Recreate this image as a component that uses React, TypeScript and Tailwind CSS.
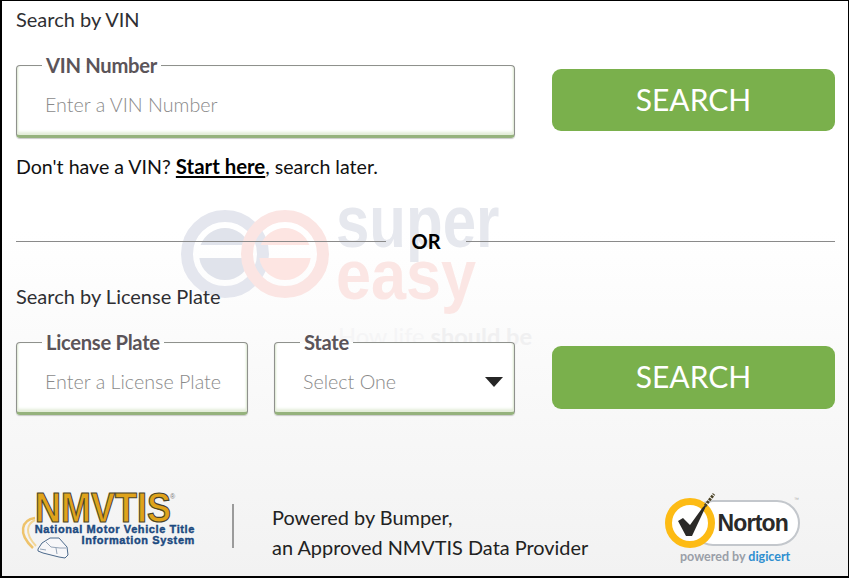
function Field({ label, placeholder, className, select }: { label: string; placeholder: string; className: string; select?: boolean }) {
  return (
    <fieldset className={`relative h-[85px] rounded-[4px] border border-[#8f918d] border-b-[3px] border-b-[#95b27d] bg-white pl-[25px] shadow-[inset_0_-4px_3px_-1px_#e3edd9,inset_2px_0_2px_-1px_#dbe6cf,inset_-2px_0_2px_-1px_#dbe6cf,0_1px_1px_#c9c9c9] ${className}`}>
      <legend className="px-[4px] text-[20.2px] leading-[24px] font-bold tracking-[-0.3px] text-[#5b5459]">{label}</legend>
      <div className="mt-[15px] ml-[3px] text-[19.7px] leading-[26px] font-light whitespace-nowrap text-[#8a8a8a]">{placeholder}</div>
      {select && <div className="absolute top-[23px] right-[11px] h-0 w-0 border-x-[9px] border-t-[10px] border-x-transparent border-t-[#262626]" />}
    </fieldset>
  );
}

function SearchButton({ className }: { className: string }) {
  return (
    <button className={`flex w-[283px] items-center justify-center rounded-[9px] bg-[#7ab04c] pb-[2px] text-[30px] text-white ${className}`}>SEARCH</button>
  );
}

function Watermark() {
  return (
    <div className="pointer-events-none absolute top-[202px] left-[178px] h-[150px] w-[360px]">
      <svg width="150" height="88" viewBox="0 0 150 88" className="absolute top-[7px] left-[1px]" fill="none">
        <circle cx="44" cy="44" r="38" stroke="#e4e6ee" strokeWidth="12" />
        <path d="M19.6 35A26 26 0 0 1 68.4 35Z" fill="#e0e3eb" />
        <path d="M18.3 48A26 26 0 0 0 69.7 48Z" fill="#e0e3eb" />
        <circle cx="104" cy="44" r="38" stroke="#fbe5e3" strokeWidth="12" />
        <path d="M79.6 35A26 26 0 0 1 128.4 35Z" fill="#fde5e2" />
        <path d="M78.3 48A26 26 0 0 0 129.7 48Z" fill="#fde5e2" />
      </svg>
      <div className="absolute top-[-19px] left-[156px] origin-top scale-y-125 font-['Liberation_Sans',sans-serif] text-[60px] leading-[60px] font-bold text-[#e6e8ee]">super</div>
      <div className="absolute top-[37px] left-[156px] origin-top scale-y-[1.12] font-['Liberation_Sans',sans-serif] text-[63px] leading-[63px] font-bold text-[#fbe6e4]">easy</div>
      <div className="absolute top-[120px] left-[158px] text-[23.6px] leading-[26px] whitespace-nowrap text-[#f5f5f6]">How life <span className="font-bold text-[#f0f0f1]">should be</span></div>
    </div>
  );
}

function NmvtisLogo() {
  return (
    <div className="relative h-[72px] w-[178px] shrink-0">
      <svg width="52" height="72" viewBox="0 0 52 72" className="absolute top-0 left-0" fill="none">
        <path d="M15 27C2 29-3 42 13 57" stroke="#eec36b" strokeWidth="2.5" />
        <path d="M15 29C7 33 4 42 16 55" stroke="#f3d697" strokeWidth="2" />
        <path d="M18 58l4-6 8-5h9l8 9 1 8-3 3-6-1-8-2-8-2-5-2z" fill="#f7f7f9" stroke="#4c6a8c" strokeWidth="1" />
        <path d="M26 51l5 5 9 1 6 0M36 57l1 6M20 58l6 1" stroke="#7b8ea6" strokeWidth=".8" />
      </svg>
      <div className="absolute top-[-1px] left-[15px] origin-top scale-y-[1.2] font-['Liberation_Sans',sans-serif] text-[36px] leading-[30px] font-bold text-[#dfa31b] [-webkit-text-stroke:1px_#4a4328]">NMVTIS</div>
      <div className="absolute top-[2px] left-[150px] font-['Liberation_Sans',sans-serif] text-[7px] leading-[8px] text-[#777]">®</div>
      <div className="absolute top-[33px] left-0 w-[175px] text-right font-['Liberation_Sans',sans-serif] text-[11px] leading-[11px] font-bold tracking-[0.6px] text-[#1c4a80]">
        <div className="[-webkit-text-stroke:0.4px_#1c4a80]">National Motor Vehicle Title</div>
        <div className="[-webkit-text-stroke:0.4px_#1c4a80]">Information System</div>
      </div>
    </div>
  );
}

function NortonLogo() {
  return (
    <div className="relative h-[78px] w-[138px] shrink-0">
      <div className="absolute top-[9px] left-[25px] flex h-[46px] w-[110px] items-center justify-end rounded-[23px] border-2 border-[#c3c7cc] bg-white pr-[10px] font-['Liberation_Sans',sans-serif] text-[23px] font-bold tracking-[-0.8px] text-[#2a2a2a]">Norton</div>
      <svg width="56" height="60" viewBox="0 0 56 60" className="absolute top-0 left-0" fill="none">
        <circle cx="25" cy="32" r="21.5" fill="#fff" stroke="#fdbb14" strokeWidth="7" />
        <path d="M13 30l5-3 7 7L38 16l4-3-15 32h-6z" fill="#2b2a28" />
        <path d="M40 15l9-12" stroke="#4b4226" strokeWidth="3" strokeDasharray="2.5 1" />
      </svg>
      <div className="absolute top-[5px] left-[129px] font-['Liberation_Sans',sans-serif] text-[5px] leading-[6px] text-[#aaa]">™</div>
      <div className="absolute top-[58px] left-[15px] text-[12.5px] leading-[16px] font-bold whitespace-nowrap text-[#9a9fa8]">
        powered by <span className="text-[#2f8fd0]">digicert</span>
      </div>
    </div>
  );
}

export default function App() {
  return (
    <div className="relative h-[578px] w-[849px] overflow-hidden border border-b-2 border-l-2 border-black bg-gradient-to-b from-white from-40% to-[#f2f2f2] pr-[13px] pl-[14px] font-['Lato',sans-serif] text-[#2f2f33]">
      <Watermark />
      <div className="relative">
        <h2 className="pt-[5px] text-[20px] leading-[26px] font-normal">Search by VIN</h2>
        <div className="mt-[21px] flex items-start">
          <Field label="VIN Number" placeholder="Enter a VIN Number" className="w-[499px]" />
          <SearchButton className="mt-[16px] ml-[37px] h-[62px]" />
        </div>
        <p className="mt-[15px] text-[19.6px] leading-[26px] text-[#111]">
          Don't have a VIN? <a className="text-[20.4px] font-bold text-black underline">Start here</a>, search later.
        </p>
        <div className="mt-[48px] flex items-center">
          <div className="h-px flex-1 bg-[#8a8a8a]" />
          <span className="w-[80px] text-center text-[20px] leading-[26px] font-bold text-black">OR</span>
          <div className="h-px w-[369px] bg-[#8a8a8a]" />
        </div>
        <h2 className="mt-[29px] text-[20px] leading-[26px] font-normal">Search by License Plate</h2>
        <div className="mt-[21px] flex items-start">
          <Field label="License Plate" placeholder="Enter a License Plate" className="w-[232px]" />
          <Field label="State" placeholder="Select One" className="ml-[26px] w-[241px]" select />
          <SearchButton className="mt-[16px] ml-[37px] h-[63px]" />
        </div>
        <div className="mt-[76px] flex items-start">
          <div className="ml-[4px]"><NmvtisLogo /></div>
          <div className="mt-[13px] ml-[34px] h-[44px] w-[2px] bg-[#9b9b9b]" />
          <div className="mt-[11px] ml-[38px] w-[393px] text-[19.9px] leading-[30px] text-[#222]">
            <div>Powered by Bumper,</div>
            <div>an Approved NMVTIS Data Provider</div>
          </div>
          <NortonLogo />
        </div>
      </div>
    </div>
  );
}
